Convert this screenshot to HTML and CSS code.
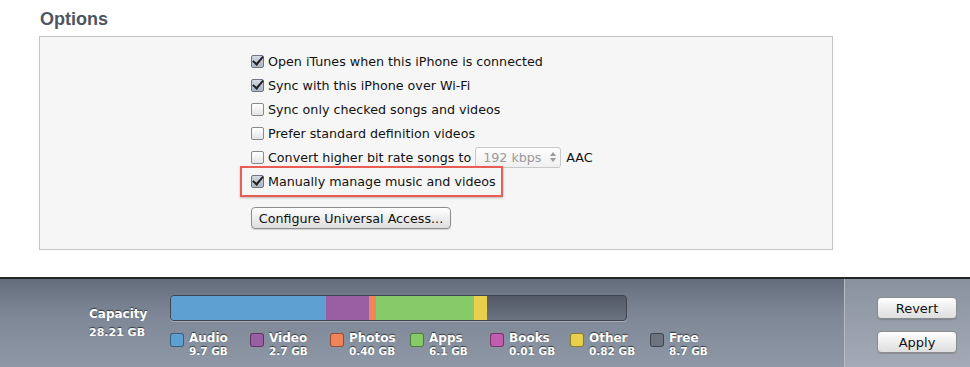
FILE: index.html
```html
<!doctype html>
<html lang="en">
  <head>
    <meta charset="UTF-8" />
    <title>iPhone Summary</title>
    <link rel="stylesheet" href="styles.css">
  </head>
  <body>
    <div class="page">
      <h2 class="section-title">Options</h2>
      <div class="options-box">
        <ul class="option-list">
          <li class="option"><span class="check checked"></span>Open iTunes when this iPhone is connected</li>
          <li class="option"><span class="check checked"></span>Sync with this iPhone over Wi-Fi</li>
          <li class="option"><span class="check"></span>Sync only checked songs and videos</li>
          <li class="option"><span class="check"></span>Prefer standard definition videos</li>
          <li class="option"><span class="check"></span>Convert higher bit rate songs to
            <span class="select">192 kbps <span class="arrows"></span></span> AAC</li>
          <li class="option highlighted"><span class="check checked"></span>Manually manage music and videos
            <span class="highlight"></span></li>
        </ul>
        <button class="button configure">Configure Universal Access...</button>
      </div>
    </div>

    <div class="status-bar">
      <div class="capacity">
        <div class="capacity-label">
          <strong>Capacity</strong>
          <span>28.21 GB</span>
        </div>
        <div class="usage">
          <div class="bar">
            <span class="seg audio" style="width: 155px"></span>
            <span class="seg video" style="width: 43px"></span>
            <span class="seg photos" style="width: 7px"></span>
            <span class="seg apps" style="width: 98px"></span>
            <span class="seg other" style="width: 13px"></span>
          </div>
          <div class="legend">
            <div class="legend-item"><span class="swatch audio"></span><div><b>Audio</b><small>9.7 GB</small></div></div>
            <div class="legend-item"><span class="swatch video"></span><div><b>Video</b><small>2.7 GB</small></div></div>
            <div class="legend-item"><span class="swatch photos"></span><div><b>Photos</b><small>0.40 GB</small></div></div>
            <div class="legend-item"><span class="swatch apps"></span><div><b>Apps</b><small>6.1 GB</small></div></div>
            <div class="legend-item"><span class="swatch books"></span><div><b>Books</b><small>0.01 GB</small></div></div>
            <div class="legend-item"><span class="swatch other"></span><div><b>Other</b><small>0.82 GB</small></div></div>
            <div class="legend-item"><span class="swatch free"></span><div><b>Free</b><small>8.7 GB</small></div></div>
          </div>
        </div>
      </div>
      <div class="actions">
        <button class="button small">Revert</button>
        <button class="button small">Apply</button>
      </div>
    </div>
  </body>
</html>
```

FILE: styles.css
```css
body {
  font-family: "DejaVu Sans", "Liberation Sans", sans-serif;
  background-color: white;
  margin: 0;
  padding: 0;
  width: 970px;
  height: 367px;
  overflow: hidden;
}
.page {
  height: 277px;
  padding: 0 0 0 39px;
}
.section-title {
  margin: 0;
  padding: 8px 0 0 1px;
  height: 36px;
  box-sizing: border-box;
  font-family: "Liberation Sans", Arial, sans-serif;
  font-size: 18px;
  line-height: 22px;
  font-weight: bold;
  color: #4e5561;
}
.options-box {
  width: 581px;
  height: 200px;
  background-color: #f6f6f6;
  border: 1px solid #c4c4c4;
  padding: 12px 0 0 211px;
}
.option-list {
  list-style: none;
  margin: 0;
  padding: 0;
}
.option {
  position: relative;
  display: flex;
  align-items: center;
  height: 24px;
  font-size: 12.7px;
  color: #111;
}
.check {
  width: 11px;
  height: 11px;
  margin-right: 4px;
  border: 1px solid #8a8a8a;
  border-radius: 2px;
  background: linear-gradient(#ffffff, #e4e4e4);
  position: relative;
  flex: none;
}
.check.checked {
  background: linear-gradient(#d6dbe3, #aab3c2);
  border-color: #6f7784;
}
.check.checked::after {
  content: "";
  position: absolute;
  left: 3px;
  top: -2px;
  width: 4px;
  height: 9px;
  border: solid #222;
  border-width: 0 2px 2px 0;
  transform: rotate(40deg);
}
.select {
  display: inline-flex;
  align-items: center;
  justify-content: space-between;
  width: 73px;
  height: 19px;
  margin: 0 5px 0 4px;
  padding: 0 4px 0 7px;
  border: 1px solid #c9c9c9;
  border-radius: 3px;
  background: linear-gradient(#fdfdfd, #f0f0f0);
  color: #9a9a9a;
  font-size: 12.7px;
}
.arrows {
  width: 6px;
  height: 10px;
  position: relative;
}
.arrows::before,
.arrows::after {
  content: "";
  position: absolute;
  left: 0;
  border-left: 3px solid transparent;
  border-right: 3px solid transparent;
}
.arrows::before {
  top: 0;
  border-bottom: 4px solid #999;
}
.arrows::after {
  bottom: 0;
  border-top: 4px solid #999;
}
.highlight {
  position: absolute;
  left: -11px;
  top: -3px;
  width: 259px;
  height: 27px;
  border: 2px solid #ea5d55;
  box-shadow: 0 1px 2px rgba(0, 0, 0, 0.25);
}
.button {
  font-family: "DejaVu Sans", "Liberation Sans", sans-serif;
  font-size: 12.7px;
  color: #111;
  background: linear-gradient(#ffffff, #ececec 55%, #dedede);
  border: 1px solid #8c8c8c;
  border-radius: 4px;
  box-shadow: 0 1px 1px rgba(0, 0, 0, 0.15);
  padding: 0;
  cursor: pointer;
}
.configure {
  margin-top: 14px;
  width: 200px;
  height: 22px;
}
.status-bar {
  display: flex;
  height: 88px;
  border-top: 2px solid #262626;
}
.capacity {
  width: 845px;
  display: flex;
  padding: 16px 0 0 89px;
  box-sizing: border-box;
  background: linear-gradient(#646d7c, #7d8796 40%, #8e98a6);
  border-right: 1px solid #b6bcc5;
  color: white;
  text-shadow: 0 -1px 1px rgba(0, 0, 0, 0.6);
}
.capacity-label {
  width: 81px;
  display: flex;
  flex-direction: column;
  padding-top: 12px;
}
.capacity-label strong {
  font-size: 12px;
  font-weight: bold;
}
.capacity-label span {
  font-size: 11px;
  font-weight: bold;
  margin-top: 5px;
}
.bar {
  display: flex;
  width: 455px;
  height: 24px;
  border: 1px solid #3e4551;
  border-radius: 4px;
  overflow: hidden;
  background: linear-gradient(#535a66, #6b7280);
  box-shadow: 0 1px 0 rgba(255, 255, 255, 0.3);
}
.seg {
  display: block;
  height: 100%;
}
.audio { background-color: #5fa0d2; }
.video { background-color: #9a5ea2; }
.photos { background-color: #f1845a; }
.apps { background-color: #87cb69; }
.books { background-color: #c25cae; }
.other { background-color: #e8d04d; }
.free { background-color: #6d7481; }
.legend {
  display: flex;
  margin-top: 11px;
}
.legend-item {
  width: 80px;
  display: flex;
  align-items: flex-start;
}
.swatch {
  width: 12px;
  height: 12px;
  margin: 1px 5px 0 0;
  border: 1px solid rgba(0, 0, 0, 0.4);
  border-radius: 3px;
  flex: none;
}
.legend-item div {
  display: flex;
  flex-direction: column;
  line-height: 13px;
}
.legend-item b {
  font-size: 12px;
}
.legend-item small {
  font-size: 10.5px;
  font-weight: bold;
}
.actions {
  flex: 1;
  display: flex;
  flex-direction: column;
  gap: 12px;
  padding: 18px 0 0 32px;
  background: linear-gradient(#8a929f, #a4abb6);
}
.button.small {
  width: 80px;
  height: 22px;
  font-size: 13px;
}
```
